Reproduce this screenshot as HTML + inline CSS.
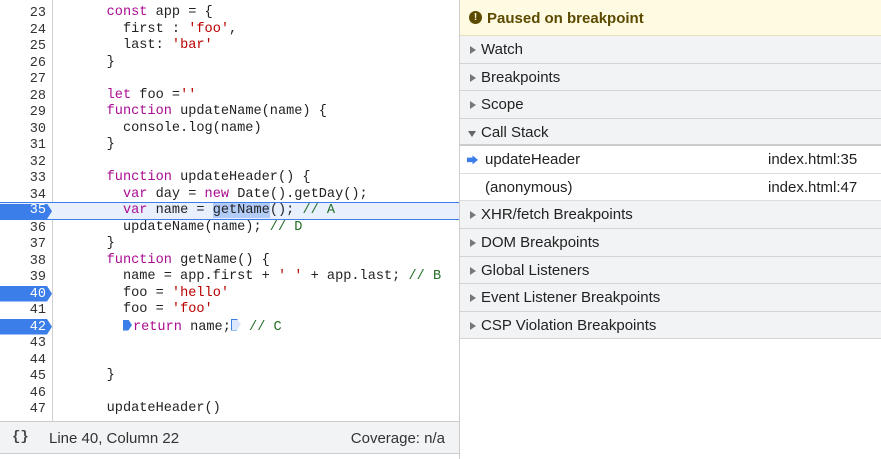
<!DOCTYPE html>
<html><head><style>
*{margin:0;padding:0;box-sizing:border-box}
body{width:881px;height:459px;overflow:hidden;background:#fff;position:relative;font-family:"Liberation Sans",sans-serif}
#ed{position:absolute;left:0;top:0;width:459px;height:421px;overflow:hidden}
.gut{position:absolute;left:52px;top:0;width:1px;height:421px;background:#d0d0d0}
.ln{position:absolute;left:0;width:459px;height:16.5px;font-family:"Liberation Mono",monospace;font-size:13.6px;line-height:16.5px;white-space:pre;color:#222}
.ln .n{position:absolute;right:413px;top:1px;width:40px;text-align:right;color:#333;font-size:13.5px}
.ln .c{position:absolute;left:74px}
.k{color:#aa0d91}.s{color:#b00}.cm{color:#236e25}
.bp .n{color:#fff}
.bp .mk{position:absolute;left:0;top:0.5px;width:52px;height:15.5px;background:#3b7de9;clip-path:polygon(0 0,47px 0,52px 50%,47px 100%,0 100%)}
.cur{background:#e8effd;border-top:1px solid #3b7de9;border-bottom:1px solid #3b7de9}
.cur .n{top:0}
.sel{background:#b3cbf7}
.tri{display:inline-block;width:9px;height:11px;background:#3b7de9;clip-path:polygon(0 0,60% 0,100% 50%,60% 100%,0 100%);vertical-align:-1px;margin-right:1px}
.tro{display:inline-block;width:10px;height:12px;border:1px solid #3b7de9;border-right:none;background:#dce7fb;vertical-align:-1px;position:relative;clip-path:polygon(0 0,60% 0,100% 50%,60% 100%,0 100%)}
#foot{position:absolute;left:0;top:421px;width:459px;height:33px;border-top:1px solid #ccc;border-bottom:1px solid #ccc;background:#f1f3f4;font-size:15px;color:#333}
#side{position:absolute;left:459px;top:0;width:422px;height:459px;border-left:1px solid #ccc}
.pz{height:36px;background:#fffbe2;border-bottom:1px solid #e6e0b8;font-weight:bold;font-size:15px;color:#5c4a00;line-height:38px;padding-left:27px;position:relative}
.pz i{position:absolute;left:9px;top:11px;width:13px;height:13px;border-radius:50%;background:#5c4a00;color:#fffbe2;font-style:normal;font-size:10px;line-height:13px;text-align:center}
.row{height:27.6px;background:#f1f3f4;border-bottom:1px solid #d4d4d4;font-size:15px;color:#222;line-height:28px;padding-left:21px;position:relative}
.row:before{content:"";position:absolute;left:10px;top:10px;border-left:6px solid #777;border-top:4px solid transparent;border-bottom:4px solid transparent}
.row.open:before{left:8px;top:12px;border-top:6px solid #666;border-left:4px solid transparent;border-right:4px solid transparent;border-bottom:none}
.open{border-bottom:2px solid #ccc}
.it{height:27.5px;background:#fff;border-bottom:1px solid #ddd;font-size:15px;color:#222;line-height:28px;padding-left:25px;position:relative}
.it span{position:absolute;left:308px}
.arr{position:absolute;left:7px;top:9px;width:11px;height:9px;background:#3b7de9;clip-path:polygon(0 25%,50% 25%,50% 0,100% 50%,50% 100%,50% 75%,0 75%)}
</style></head><body>
<div id="ed">
<div class="gut"></div>
<div class="ln" style="top:5px"><span class="n">23</span><span class="c">    <span class="k">const</span> app = {</span></div>
<div class="ln" style="top:21.5px"><span class="n">24</span><span class="c">      first : <span class="s">'foo'</span>,</span></div>
<div class="ln" style="top:38px"><span class="n">25</span><span class="c">      last: <span class="s">'bar'</span></span></div>
<div class="ln" style="top:54.5px"><span class="n">26</span><span class="c">    }</span></div>
<div class="ln" style="top:71px"><span class="n">27</span></div>
<div class="ln" style="top:87.5px"><span class="n">28</span><span class="c">    <span class="k">let</span> foo =<span class="s">''</span></span></div>
<div class="ln" style="top:104px"><span class="n">29</span><span class="c">    <span class="k">function</span> updateName(name) {</span></div>
<div class="ln" style="top:120.5px"><span class="n">30</span><span class="c">      console.log(name)</span></div>
<div class="ln" style="top:137px"><span class="n">31</span><span class="c">    }</span></div>
<div class="ln" style="top:153.5px"><span class="n">32</span></div>
<div class="ln" style="top:170px"><span class="n">33</span><span class="c">    <span class="k">function</span> updateHeader() {</span></div>
<div class="ln" style="top:186.5px"><span class="n">34</span><span class="c">      <span class="k">var</span> day = <span class="k">new</span> Date().getDay();</span></div>
<div class="ln cur bp" style="top:202px;height:17.5px;line-height:15.5px"><span class="mk"></span><span class="n">35</span><span class="c">      <span class="k">var</span> name = <span class="sel">getName</span>(); <span class="cm">// A</span></span></div>
<div class="ln" style="top:219.5px"><span class="n">36</span><span class="c">      updateName(name); <span class="cm">// D</span></span></div>
<div class="ln" style="top:236px"><span class="n">37</span><span class="c">    }</span></div>
<div class="ln" style="top:252.5px"><span class="n">38</span><span class="c">    <span class="k">function</span> getName() {</span></div>
<div class="ln" style="top:269px"><span class="n">39</span><span class="c">      name = app.first + <span class="s">' '</span> + app.last; <span class="cm">// B</span></span></div>
<div class="ln bp" style="top:285.5px"><span class="mk"></span><span class="n">40</span><span class="c">      foo = <span class="s">'hello'</span></span></div>
<div class="ln" style="top:302px"><span class="n">41</span><span class="c">      foo = <span class="s">'foo'</span></span></div>
<div class="ln bp" style="top:318.5px"><span class="mk"></span><span class="n">42</span><span class="c">      <span class="tri"></span><span class="k">return</span> name;<span class="tro"></span> <span class="cm">// C</span></span></div>
<div class="ln" style="top:335px"><span class="n">43</span></div>
<div class="ln" style="top:351.5px"><span class="n">44</span></div>
<div class="ln" style="top:368px"><span class="n">45</span><span class="c">    }</span></div>
<div class="ln" style="top:384.5px"><span class="n">46</span></div>
<div class="ln" style="top:401px"><span class="n">47</span><span class="c">    updateHeader()</span></div>
</div>
<div id="foot">
<span style="position:absolute;left:12px;top:7px;font-family:'Liberation Mono',monospace;font-weight:bold;font-size:14px;color:#444">{}</span>
<span style="position:absolute;left:49px;top:8px">Line 40, Column 22</span>
<span style="position:absolute;right:14px;top:8px">Coverage: n/a</span>
</div>
<div id="side">
<div class="pz"><i>!</i>Paused on breakpoint</div>
<div class="row">Watch</div>
<div class="row">Breakpoints</div>
<div class="row">Scope</div>
<div class="row open">Call Stack</div>
<div class="it"><div class="arr"></div>updateHeader<span>index.html:35</span></div>
<div class="it">(anonymous)<span>index.html:47</span></div>
<div class="row">XHR/fetch Breakpoints</div>
<div class="row">DOM Breakpoints</div>
<div class="row">Global Listeners</div>
<div class="row">Event Listener Breakpoints</div>
<div class="row">CSP Violation Breakpoints</div>
</div>
</body></html>
